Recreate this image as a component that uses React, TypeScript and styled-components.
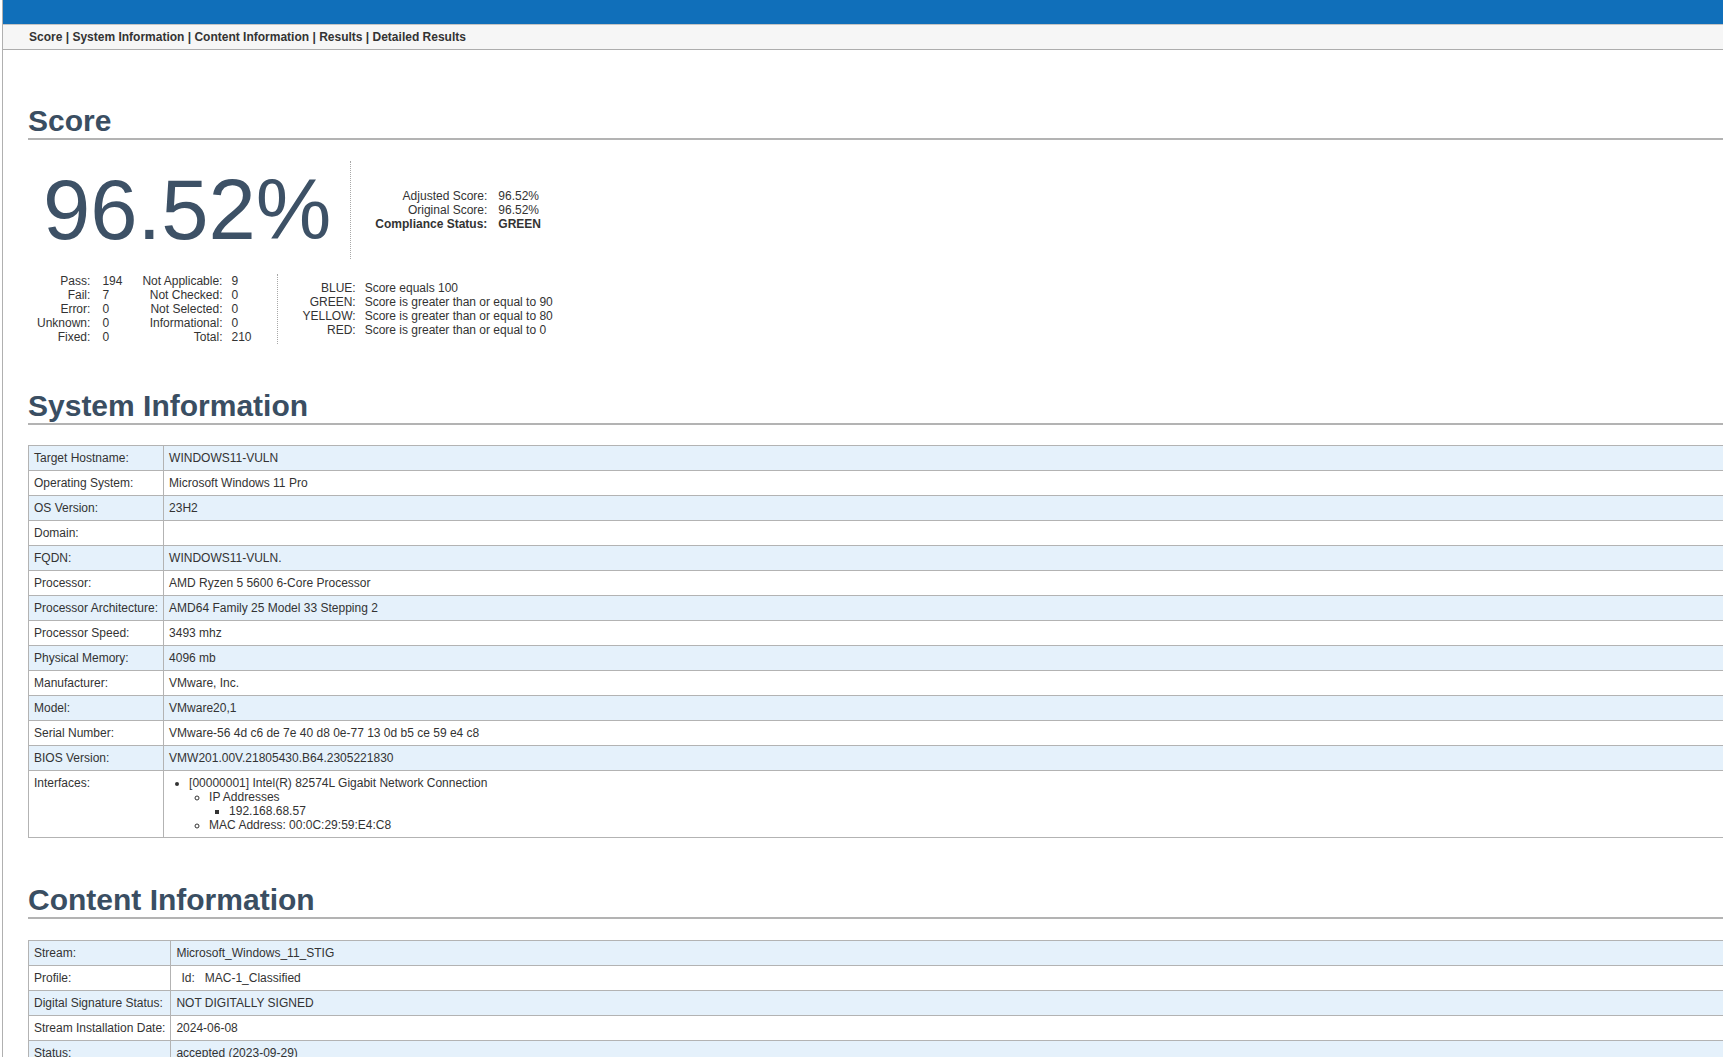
import React from 'react';
import styled, { createGlobalStyle } from 'styled-components';

const GlobalStyle = createGlobalStyle`
  html, body {
    margin: 0;
    padding: 0;
    overflow: hidden;
    background: #fff;
  }
  body {
    font-family: "Liberation Sans", Arial, sans-serif;
    font-size: 12px;
    color: #333;
  }
`;

const Page = styled.div`
  width: 1800px;
  min-height: 1057px;
  margin-left: 2px;
  border-left: 1px solid #b0b0b0;
`;

const TopBar = styled.div`
  height: 24px;
  background: #106fba;
`;

const NavBar = styled.nav`
  background: #f6f6f6;
  border-top: 1px solid #c4c4c4;
  border-bottom: 1px solid #adadad;
  padding: 5px 0 5px 26px;
  line-height: 14px;
  font-weight: bold;
  color: #333;
`;

const NavLink = styled.a`
  color: #333;
  text-decoration: none;
`;

const Main = styled.main`
  padding: 54px 0 0 25px;
`;

const Section = styled.section`
  margin-bottom: 45px;
`;

const Heading = styled.h2`
  margin: 0;
  font-family: "Liberation Sans", Arial, sans-serif;
  font-size: 30px;
  font-weight: bold;
  line-height: normal;
  color: #3a4e62;
  border-bottom: 2px solid #b3b3b3;
`;

/* ---- score block ---- */

const ScoreTop = styled.div`
  display: flex;
  align-items: center;
  margin-top: 21px;
`;

const BigScore = styled.div`
  font-size: 85px;
  line-height: normal;
  color: #3d5166;
  padding: 0 19px 0 15px;
  border-right: 1px dotted #a8a8a8;
`;

const KeyTable = styled.table<{ $offset: number }>`
  border-collapse: collapse;
  margin-left: ${(p) => p.$offset}px;
  line-height: normal;
  color: #333;
  td {
    padding: 0;
    white-space: nowrap;
  }
`;

const KeyCell = styled.td<{ $pad: number; $bold?: boolean }>`
  text-align: right;
  padding-right: ${(p) => p.$pad}px !important;
  font-weight: ${(p) => (p.$bold ? 'bold' : 'normal')};
`;

const ValCell = styled.td<{ $pad?: number; $bold?: boolean }>`
  text-align: left;
  padding-right: ${(p) => p.$pad ?? 0}px !important;
  font-weight: ${(p) => (p.$bold ? 'bold' : 'normal')};
`;

const StatsRow = styled.div`
  display: flex;
  align-items: center;
  margin-top: 15px;
`;

const CountsBox = styled.div`
  border-right: 1px dotted #a8a8a8;
`;

/* ---- info tables ---- */

const InfoTable = styled.table<{ $top: number }>`
  width: 100%;
  margin-top: ${(p) => p.$top}px;
  border-collapse: collapse;
  border: 1px solid #b3b3b3;
  color: #333;
  line-height: 14px;
`;

const InfoRow = styled.tr<{ $shade: boolean }>`
  background: ${(p) => (p.$shade ? '#e5f1fb' : '#fff')};
`;

const InfoKey = styled.td`
  width: 1px;
  white-space: nowrap;
  vertical-align: top;
  padding: 5px;
  border: 1px solid #b3b3b3;
`;

const InfoVal = styled.td`
  vertical-align: top;
  padding: 5px;
  border: 1px solid #b3b3b3;
`;

const List = styled.ul`
  margin: 0;
  padding-left: 20px;
`;

const InnerTable = styled.table`
  border-collapse: collapse;
  td {
    padding: 0 5px;
  }
`;

const navItems = ['Score', 'System Information', 'Content Information', 'Results', 'Detailed Results'];

const counts: [string, string, string, string][] = [
  ['Pass:', '194', 'Not Applicable:', '9'],
  ['Fail:', '7', 'Not Checked:', '0'],
  ['Error:', '0', 'Not Selected:', '0'],
  ['Unknown:', '0', 'Informational:', '0'],
  ['Fixed:', '0', 'Total:', '210'],
];

const legend: [string, string][] = [
  ['BLUE:', 'Score equals 100'],
  ['GREEN:', 'Score is greater than or equal to 90'],
  ['YELLOW:', 'Score is greater than or equal to 80'],
  ['RED:', 'Score is greater than or equal to 0'],
];

const systemInfo: [string, React.ReactNode][] = [
  ['Target Hostname:', 'WINDOWS11-VULN'],
  ['Operating System:', 'Microsoft Windows 11 Pro'],
  ['OS Version:', '23H2'],
  ['Domain:', ''],
  ['FQDN:', 'WINDOWS11-VULN.'],
  ['Processor:', 'AMD Ryzen 5 5600 6-Core Processor'],
  ['Processor Architecture:', 'AMD64 Family 25 Model 33 Stepping 2'],
  ['Processor Speed:', '3493 mhz'],
  ['Physical Memory:', '4096 mb'],
  ['Manufacturer:', 'VMware, Inc.'],
  ['Model:', 'VMware20,1'],
  ['Serial Number:', 'VMware-56 4d c6 de 7e 40 d8 0e-77 13 0d b5 ce 59 e4 c8'],
  ['BIOS Version:', 'VMW201.00V.21805430.B64.2305221830'],
  [
    'Interfaces:',
    <List>
      <li>
        [00000001] Intel(R) 82574L Gigabit Network Connection
        <List>
          <li>
            IP Addresses
            <List>
              <li>192.168.68.57</li>
            </List>
          </li>
          <li>MAC Address: 00:0C:29:59:E4:C8</li>
        </List>
      </li>
    </List>,
  ],
];

const contentInfo: [string, React.ReactNode][] = [
  ['Stream:', 'Microsoft_Windows_11_STIG'],
  [
    'Profile:',
    <InnerTable>
      <tbody>
        <tr>
          <td>Id:</td>
          <td>MAC-1_Classified</td>
        </tr>
      </tbody>
    </InnerTable>,
  ],
  ['Digital Signature Status:', 'NOT DIGITALLY SIGNED'],
  ['Stream Installation Date:', '2024-06-08'],
  ['Status:', 'accepted (2023-09-29)'],
];

function Info({ rows, top }: { rows: [string, React.ReactNode][]; top: number }) {
  return (
    <InfoTable $top={top}>
      <tbody>
        {rows.map(([k, v], i) => (
          <InfoRow key={k} $shade={i % 2 === 0}>
            <InfoKey>{k}</InfoKey>
            <InfoVal>{v}</InfoVal>
          </InfoRow>
        ))}
      </tbody>
    </InfoTable>
  );
}

export default function App() {
  return (
    <>
      <GlobalStyle />
      <Page>
        <TopBar />
        <NavBar>
          {navItems.map((n, i) => (
            <React.Fragment key={n}>
              {i > 0 && ' | '}
              <NavLink href={'#' + n.replace(/ /g, '')}>{n}</NavLink>
            </React.Fragment>
          ))}
        </NavBar>
        <Main>
          <Section>
            <Heading>Score</Heading>
            <ScoreTop>
              <BigScore>96.52%</BigScore>
              <KeyTable $offset={24}>
                <tbody>
                  <tr>
                    <KeyCell $pad={11}>Adjusted Score:</KeyCell>
                    <ValCell>96.52%</ValCell>
                  </tr>
                  <tr>
                    <KeyCell $pad={11}>Original Score:</KeyCell>
                    <ValCell>96.52%</ValCell>
                  </tr>
                  <tr>
                    <KeyCell $pad={11} $bold>
                      Compliance Status:
                    </KeyCell>
                    <ValCell $bold>GREEN</ValCell>
                  </tr>
                </tbody>
              </KeyTable>
            </ScoreTop>
            <StatsRow>
              <CountsBox>
                <KeyTable $offset={9}>
                  <tbody>
                    {counts.map(([a, av, b, bv]) => (
                      <tr key={a}>
                        <KeyCell $pad={12}>{a}</KeyCell>
                        <ValCell $pad={20}>{av}</ValCell>
                        <KeyCell $pad={9}>{b}</KeyCell>
                        <ValCell $pad={25}>{bv}</ValCell>
                      </tr>
                    ))}
                  </tbody>
                </KeyTable>
              </CountsBox>
              <KeyTable $offset={25}>
                <tbody>
                  {legend.map(([k, v]) => (
                    <tr key={k}>
                      <KeyCell $pad={9}>{k}</KeyCell>
                      <ValCell>{v}</ValCell>
                    </tr>
                  ))}
                </tbody>
              </KeyTable>
            </StatsRow>
          </Section>
          <Section>
            <Heading>System Information</Heading>
            <Info rows={systemInfo} top={20} />
          </Section>
          <Section>
            <Heading>Content Information</Heading>
            <Info rows={contentInfo} top={21} />
          </Section>
        </Main>
      </Page>
    </>
  );
}
